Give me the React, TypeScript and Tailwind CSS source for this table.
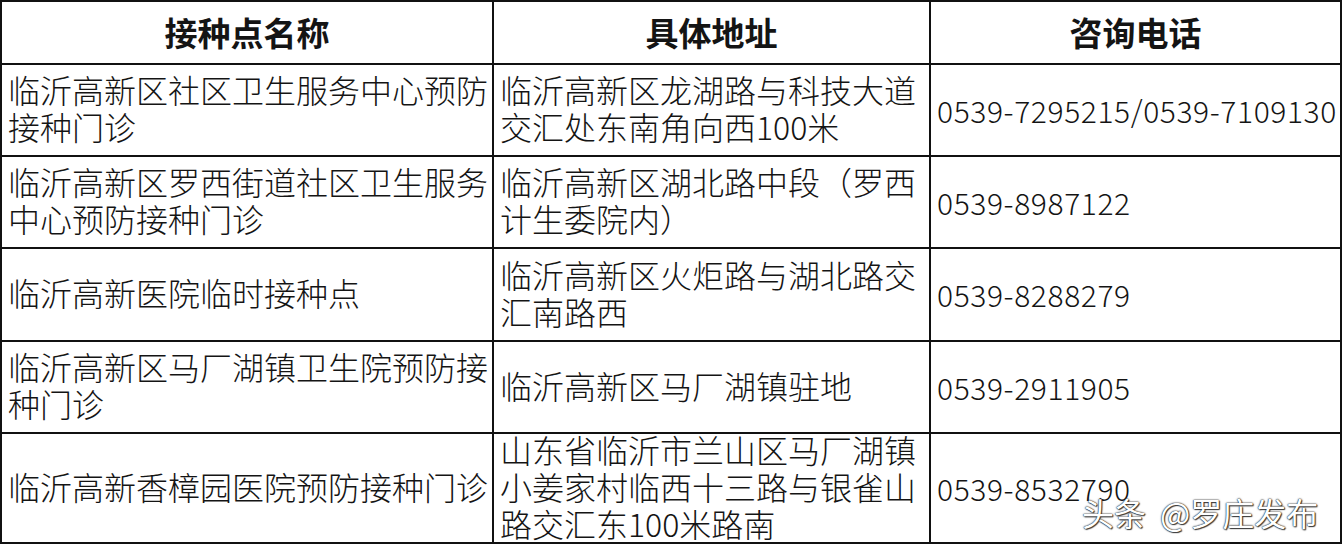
import React from 'react';

const rows: { name: string[]; addr: string[]; tel: string }[] = [
  {
    name: ['临沂高新区社区卫生服务中心预防', '接种门诊'],
    addr: ['临沂高新区龙湖路与科技大道', '交汇处东南角向西100米'],
    tel: '0539-7295215/0539-7109130',
  },
  {
    name: ['临沂高新区罗西街道社区卫生服务', '中心预防接种门诊'],
    addr: ['临沂高新区湖北路中段（罗西', '计生委院内）'],
    tel: '0539-8987122',
  },
  {
    name: ['临沂高新医院临时接种点'],
    addr: ['临沂高新区火炬路与湖北路交', '汇南路西'],
    tel: '0539-8288279',
  },
  {
    name: ['临沂高新区马厂湖镇卫生院预防接', '种门诊'],
    addr: ['临沂高新区马厂湖镇驻地'],
    tel: '0539-2911905',
  },
  {
    name: ['临沂高新香樟园医院预防接种门诊'],
    addr: ['山东省临沂市兰山区马厂湖镇', '小姜家村临西十三路与银雀山', '路交汇东100米路南'],
    tel: '0539-8532790',
  },
];

function Lines({ lines }: { lines: string[] }) {
  return (
    <div className="-mt-[4px]">
      {lines.map((l, i) => (
        <div key={i} className="whitespace-nowrap">
          {l}
        </div>
      ))}
    </div>
  );
}

export default function App() {
  return (
    <div className="relative w-[1344px] h-[546px] bg-white overflow-hidden font-['Noto_Sans_CJK_SC',sans-serif] text-[#141414]">
      <div className="grid w-[1342px] grid-cols-[490px_435px_409px] grid-rows-[61px_90px_90px_91px_90px_108px] gap-[2px] p-[2px] bg-[#111]">
        {/* header */}
        <div className="bg-white flex items-center justify-center text-[33px] font-bold">接种点名称</div>
        <div className="bg-white flex items-center justify-center text-[33px] font-bold">具体地址</div>
        <div className="bg-white flex items-center justify-center text-[33px] font-bold">咨询电话</div>

        {rows.map((r, i) => (
          <React.Fragment key={i}>
            <div className="bg-white flex items-center pl-[6px] text-[32px] leading-[37px] font-light">
              <Lines lines={r.name} />
            </div>
            <div className="bg-white flex items-center pl-[6px] text-[32px] leading-[37px] font-light">
              <Lines lines={r.addr} />
            </div>
            <div className="bg-white flex items-center pl-[6px] text-[30px] leading-[37px] font-light tabular-nums tracking-[0.6px]">
              {r.tel}
            </div>
          </React.Fragment>
        ))}
      </div>

      {/* watermark */}
      <div className="absolute left-[1082px] top-[493px] flex items-center gap-[14px] text-[32px] leading-[38px] text-white whitespace-nowrap [text-shadow:0_0_1px_#000,0_0_2px_#333,1px_1px_1px_#444]">
        <span>头条</span>
        <span>@罗庄发布</span>
      </div>
    </div>
  );
}
